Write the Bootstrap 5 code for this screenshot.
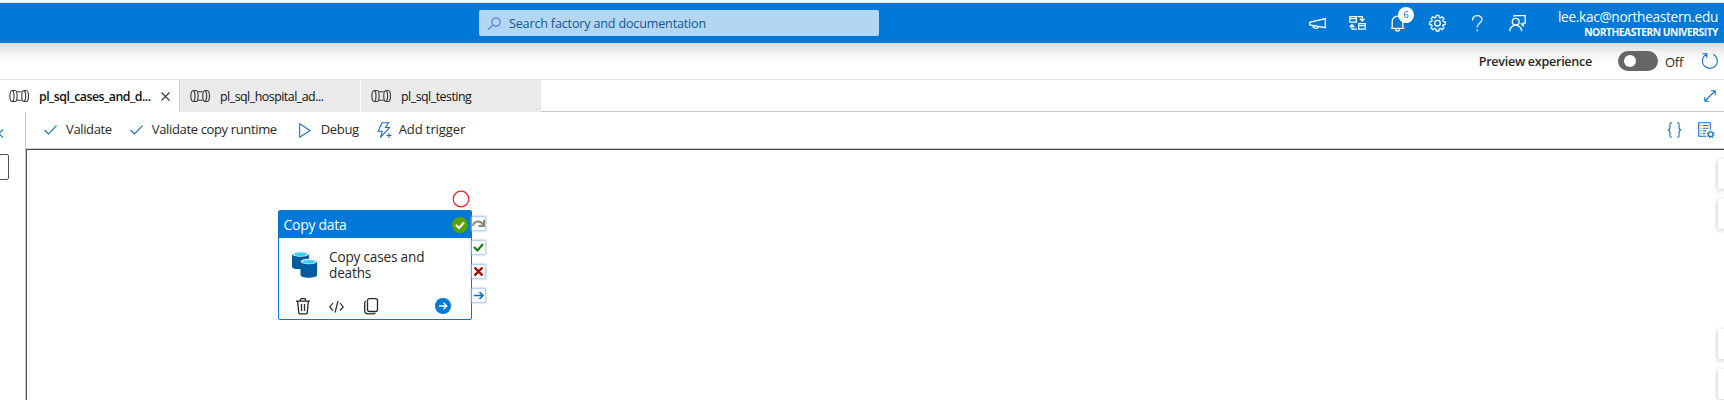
<!DOCTYPE html>
<html lang="en">
<head>
<meta charset="utf-8">
<title>Data Factory</title>
<meta name="viewport" content="width=device-width, initial-scale=1">
<link href="https://cdn.jsdelivr.net/npm/bootstrap@5.3.0/dist/css/bootstrap.min.css" rel="stylesheet">
<style>
body{font-family:"Open Sans","Noto Sans",sans-serif;font-size:13px;line-height:16px;color:#292827;height:400px;overflow:hidden;background:#fff}
svg{display:block;flex:none;fill:none;overflow:visible}
.tx{white-space:nowrap}
.topline{height:3px;border-bottom:1px solid #e6e6e6}
.hdr{height:40px;background:#0078d7;color:#fff}
.hdr-search{width:400px;height:26px;margin-left:479px;background:#b3d7f3;border-radius:2px;color:#115892;font-size:12.6px;letter-spacing:-.183px;padding-left:9px}
.hdr-search .tx{padding-top:1px}
.hdr-icons{left:1309px;top:9px}
.hdr-icons svg{stroke:#fff;stroke-width:1.3}
.bell-count{left:8px;top:-5px;width:16px;height:16px;font-size:9.5px;color:#0078d7;background:#fff}
.acct{margin-right:6px;padding-top:2px}
.acct-mail{font-size:13.6px;line-height:17px;letter-spacing:-.28px}
.acct-org{font-size:10.2px;line-height:15px;font-weight:700;letter-spacing:-.45px}
.strip{height:37px;border-bottom:1px solid #dedede;background:linear-gradient(#dadada,#f3f3f3 10px,#fff 21px);padding-right:5px}
.strip-label{font-size:12.6px;letter-spacing:-.29px}
.strip .tx{padding-top:2px}
.sw{width:40px;height:20px;border-radius:10px;background:#666;padding:4px 6px}
.sw i{width:12px;height:12px;background:#fff}
.tabbar{height:32px}
.tb{width:180px;border-right:1px solid #d0d0d0;padding-left:9px;color:#111;font-size:12.4px;letter-spacing:-.5px}
.tb.off{background:#eaeaea}
.tb svg{stroke:#3a3938;stroke-width:1.1}
.tabrest{border-bottom:1px solid #c8c8c8}
.side{width:26px;border-right:1px solid #c8c8c8}
.sidebox{left:-10px;top:42px;width:19px;height:26px;border:1px solid #555;border-radius:2px}
.bar{height:37px;border-bottom:1px solid #cfcfcf;letter-spacing:-.355px}
.bar .tx{padding-bottom:2px}
.blue{stroke:#1a6fc4;stroke-width:1.1}
.cv{border-top:1px solid #4b4b4b;border-left:1px solid #555}
.node{left:251px;top:60px;width:194px;height:110px;border:1px solid #0078d7;border-radius:2px;background:#fff}
.node-h{height:27px;background:#0078d7;color:#fff;font-size:14px;letter-spacing:-.286px;padding-left:4.5px;padding-right:3px}
.node-t{font-size:13.6px;line-height:16px;left:50px;top:38px;letter-spacing:-.18px}
.port{left:445px;width:13px;height:13px;background:#fff;box-shadow:0 0 2px 1px #8fc1ec}
.fly{right:0;width:6px;height:30px;background:#fff;box-shadow:0 1px 5px #bbb}
</style>
</head>
<body class="d-flex flex-column">
<div class="topline flex-shrink-0"></div>
<header class="hdr d-flex align-items-center flex-shrink-0 position-relative">
  <div class="hdr-search d-flex align-items-center">
    <svg width="13" height="13" stroke="#5b82dc" stroke-width="1.2"><circle cx="8" cy="5" r="4.2"/><path d="M5 8 0 12.5"/></svg>
    <span class="tx" style="margin-left:8px">Search factory and documentation</span>
  </div>
  <div class="hdr-icons position-absolute d-flex">
    <svg width="40" height="20"><path d="M.7 10.300v2.700l15.600 2.700V6.500z M4 13.700v1.100l2 1.500h2l1.500-1.600"/></svg>
    <svg width="41" height="20"><path d="M.7 4.700h6.600v5.500H.7z M.7 6.700h6.600 M9.700 11.700h6.600v5.500H9.700z M9.700 13.700h6.600 M8.500 4.700h4.800V8.500 M11 6.700 13.300 9l2.200-2.300 M8 17.200H3v-4.500 M.7 15 3 12.700 5.300 15"/></svg>
    <div class="position-relative" style="width:39px">
      <svg width="16" height="20"><path d="M2.200 15.500V9.500A5.300 5.300 0 0 1 12.800 9.300v6.200 M.7 16.300h13.600 M5.500 17a2 2 0 0 0 4 0"/></svg>
      <span class="bell-count position-absolute rounded-circle d-flex align-items-center justify-content-center">6</span>
    </div>
    <svg width="40" height="20"><g transform="translate(0 .200)"><path d="M7.300 3.200h2.400l.5 2 1.100.5 1.900-1.100 1.700 1.700-1.100 1.900.5 1.100 2 .5v2.400l-2 .5-.5 1.100 1.100 1.900-1.700 1.700-1.900-1.100-1.100.5-.5 2H7.300l-.5-2-1.100-.5-1.900 1.100-1.700-1.700 1.100-1.900-.5-1.100-2-.5V9.800l2-.5.5-1.100-1.100-1.900 1.700-1.700 1.900 1.100 1.100-.5z"/><circle cx="8.500" cy="11" r="2.800"/></g></svg>
    <svg width="41" height="20" style="margin-right:1px"><path d="M3.500 8.500C3.500 2 13 2.200 13 7.500c0 3.500-4.800 3.700-4.800 8 M8.200 17.500v1.700"/></svg>
    <svg width="20" height="20" style="margin-left:-2px"><path d="M5 5V3.700h11.200v7.500h-2v2.500L11.700 11.200"/><circle cx="6.700" cy="9.700" r="3.400"/><path d="M.7 19.200a6 6 0 0 1 12 0"/></svg>
  </div>
  <div class="acct ms-auto text-end">
    <div class="acct-mail"><span class="tx">lee.kac@northeastern.edu</span></div>
    <div class="acct-org"><span class="tx">NORTHEASTERN UNIVERSITY</span></div>
  </div>
</header>
<div class="strip d-flex align-items-center justify-content-end flex-shrink-0">
  <span class="tx strip-label fw-semibold" style="margin-right:26px">Preview experience</span>
  <span class="sw"><i class="d-block rounded-circle"></i></span>
  <span class="tx" style="margin:0 18px 0 7px;letter-spacing:-.286px">Off</span>
  <svg width="18" height="18" class="blue"><path d="M12.200 2.200A7.500 7.500 0 1 1 5.300 2.300 M1.500 1.800h4.300v4.300"/></svg>
</div>
<div class="tabbar d-flex flex-shrink-0">
  <div class="tb d-flex align-items-center fw-semibold">
    <svg width="20" height="14"><use href="#pipe"/></svg><span class="tx" style="margin-left:10px;padding-top:1px;letter-spacing:-.53px">pl_sql_cases_and_d...</span>
    <svg width="9" height="9" style="margin-left:10px"><path d="m.5.5 8 8m0-8-8 8"/></svg>
  </div>
  <div class="tb off d-flex align-items-center" style="width:181px;border-color:#fff;padding-left:10px">
    <svg width="20" height="14"><use href="#pipe"/></svg><span class="tx" style="margin-left:10px;padding-top:1px">pl_sql_hospital_ad...</span>
  </div>
  <div class="tb off d-flex align-items-center border-0" style="padding-left:10px">
    <svg width="20" height="14"><use href="#pipe"/></svg><span class="tx" style="margin-left:10px;padding-top:1px">pl_sql_testing</span>
  </div>
  <div class="tabrest flex-grow-1 d-flex align-items-center justify-content-end pe-2">
    <svg width="12" height="12" class="blue"><path d="M1 11 11 1 M7 .8h4.200V5 M5 11.200H.8V7"/></svg>
  </div>
</div>
<main class="d-flex flex-grow-1">
  <aside class="side position-relative flex-shrink-0">
    <svg class="blue position-absolute" style="left:-4px;top:17px" width="8" height="9"><path d="M7 .5 3 4.500l4 4"/></svg>
    <div class="sidebox position-absolute"></div>
  </aside>
  <div class="flex-grow-1 d-flex flex-column">
    <div class="bar d-flex align-items-center flex-shrink-0">
      <svg class="blue" width="13" height="10" style="margin-left:18px"><path d="m.5 5 4 4L12.500.700"/></svg>
      <span class="tx" style="margin-left:9px">Validate</span>
      <svg class="blue" width="13" height="10" style="margin-left:18px"><path d="m.5 5 4 4L12.500.700"/></svg>
      <span class="tx" style="margin-left:9px">Validate copy runtime</span>
      <svg class="blue" width="12" height="15" style="margin-left:22px"><path d="M.7.8v13.400L11 7.500z"/></svg>
      <span class="tx" style="margin-left:10px">Debug</span>
      <svg class="blue" width="15" height="17" style="margin-left:18px"><path d="M5 .7h6.500L8.500 5.500h4L3.500 15.300l1.800-6H1.200z M9.500 13.500h5 M12 11v5"/></svg>
      <span class="tx" style="margin-left:7px;letter-spacing:-.1px">Add trigger</span>
      <svg class="blue ms-auto" width="15" height="16"><path d="M5 .7C2 .7 3 3 3 5c0 1.800-.7 3-2.200 3C2.300 8 3 9.200 3 11c0 2-1 4.300 2 4.300 M10 .7c3 0 2 2.300 2 4.300 0 1.800.7 3 2.200 3-1.500 0-2.200 1.200-2.200 3 0 2 1 4.300-2 4.300"/></svg>
      <svg class="blue" width="17" height="16" style="margin:0 9px 0 16px"><path d="M8 14.300H.7V.7h11.600v7 M2.500 3.500h1 M5 3.500h5.500 M2.500 6.200h1 M5 6.200h5.500 M2.500 8.900h1 M5 8.900h3 M2.500 11.600h1 M5 11.600h2"/><circle cx="12.700" cy="12.300" r="2.300"/><circle cx="12.700" cy="12.300" r="3.400" stroke-dasharray="1.340 1.330"/></svg>
    </div>
    <div class="cv flex-grow-1 position-relative overflow-hidden">
      <svg class="position-absolute" style="left:425px;top:40px" width="18" height="18"><circle cx="9" cy="9" r="7.800" stroke="#ee1c25" stroke-width="1.200"/></svg>
      <div class="node position-absolute">
        <div class="node-h d-flex align-items-center justify-content-between">
          <span class="tx" style="padding-top:1px">Copy data</span>
          <svg width="16" height="16"><circle cx="8" cy="8" r="8" fill="#57a300"/><path d="m4 8 3 3 5-5.500" stroke="#fff" stroke-width="2"/></svg>
        </div>
        <svg class="position-absolute" style="left:13px;top:40px" width="26" height="28"><path fill="#005ba1" d="M0 3v13c0 3 17 3 17 0V3z"/><ellipse cx="8.500" cy="3" rx="8.500" ry="2.800" fill="#e8e8e8"/><ellipse cx="8.500" cy="3.200" rx="6.500" ry="1.800" fill="#32d4f5"/><path fill="#005ba1" d="M8.500 10.500V24c0 3.600 16.500 3.600 16.500 0V10.500z"/><ellipse cx="16.800" cy="10.500" rx="8.200" ry="2.800" fill="#e8e8e8"/><ellipse cx="16.800" cy="10.700" rx="6.300" ry="1.800" fill="#32d4f5"/></svg>
        <div class="node-t position-absolute"><span class="tx">Copy cases and</span><br><span class="tx">deaths</span></div>
        <svg class="position-absolute" style="left:17px;top:87px" width="14" height="17" stroke="#292827" stroke-width="1.300"><path d="M0 3.200h14 M4.500 3V1.500Q4.500.7 5.500.7h3q1 0 1 .8V3 M1.700 3.500l1 11q.1 1.300 1.300 1.300h6q1.200 0 1.300-1.300l1-11 M5.500 6v7 M8.500 6v7"/></svg>
        <svg class="position-absolute" style="left:50px;top:90px" width="15" height="12" stroke="#292827" stroke-width="1.200"><path d="M4 2 .8 6 4 9.500 M11 2l3.200 4L11 9.500 M9 0 6 11.500"/></svg>
        <svg class="position-absolute" style="left:85px;top:87px" width="15" height="17" stroke="#292827" stroke-width="1.300"><rect x="3.500" y=".7" width="10" height="12.800" rx="2"/><path d="M1.800 3Q.7 3.500.7 5v7.500q0 3.300 3.300 3.300h5q1.500 0 2.300-1"/></svg>
        <svg class="position-absolute" style="left:156px;top:87px" width="16" height="16"><circle cx="8" cy="8" r="8" fill="#0078d7"/><path d="M4 8h7.500M8.500 4.700 11.800 8l-3.300 3.300" stroke="#fff" stroke-width="1.400"/></svg>
      </div>
      <div class="port position-absolute" style="top:67px"><svg width="13" height="13" stroke="#8a8886" stroke-width="2"><path d="M1 9c1-5.500 8-6 10-1 M12 3v6H6.500"/></svg></div>
      <div class="port position-absolute" style="top:91px"><svg width="13" height="13" stroke="#107c10" stroke-width="2.200"><path d="m2 6 3.500 3.500L11 3"/></svg></div>
      <div class="port position-absolute" style="top:115px"><svg width="13" height="13" stroke="#a80000" stroke-width="2.400"><path d="m2.500 2.500 8 8m0-8-8 8"/></svg></div>
      <div class="port position-absolute" style="top:139px"><svg width="13" height="13" stroke="#0f6cbd" stroke-width="1.600"><path d="M2 6.500h9M7.500 3 11 6.500 7.500 10"/></svg></div>
      <div class="fly position-absolute" style="top:9px"></div>
      <div class="fly position-absolute" style="top:49px"></div>
      <div class="fly position-absolute" style="top:179px"></div>
      <div class="fly position-absolute" style="top:219px"></div>
    </div>
  </div>
</main>
<svg width="0" height="0" class="position-absolute"><defs><g id="pipe"><path d="M3.500 1.500C0 1.500 0 12.500 3.500 12.500 M3.500 1.500C5.500 3 5.500 11 3.500 12.500 M3.500 1.500H6C8.800 1.500 8.800 12.500 6 12.500H3.500 M8 2.700h4.500 M8 11.300h4.500 M15 1.500C12 1.500 12 12.500 15 12.500 M15 1.500h2C20.300 1.500 20.300 12.500 17 12.500H15 M15 1.500C17.200 3 17.200 11 15 12.500"/></g></defs></svg>
<script src="https://cdn.jsdelivr.net/npm/bootstrap@5.3.0/dist/js/bootstrap.bundle.min.js"></script>
</body>
</html>
